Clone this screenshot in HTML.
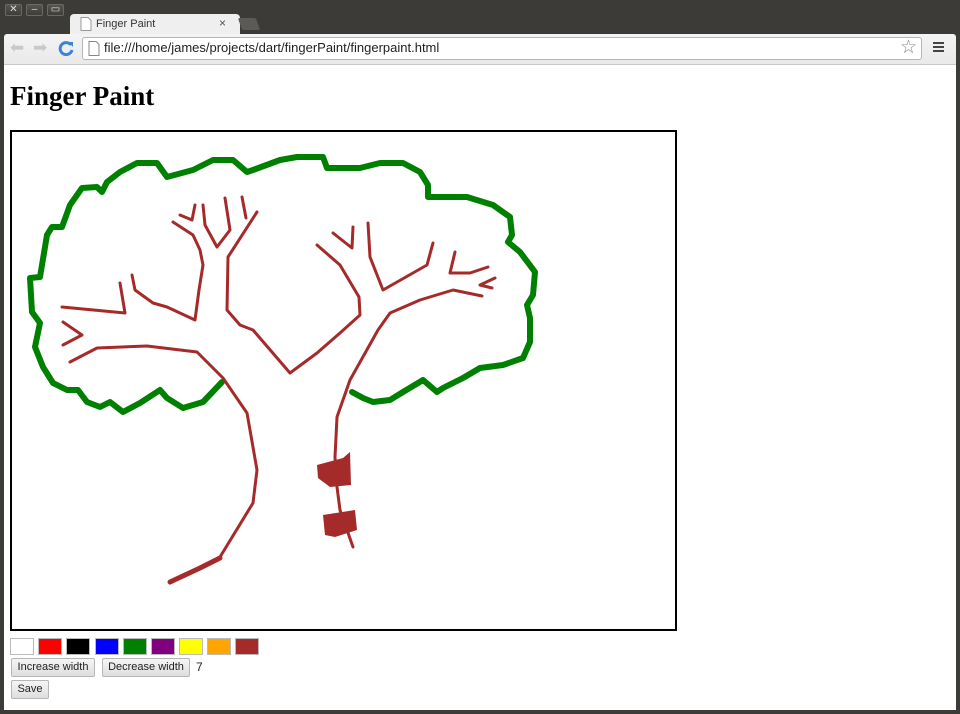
<!DOCTYPE html>
<html><head><meta charset="utf-8"><style>
*{margin:0;padding:0;box-sizing:border-box}
body{width:960px;height:714px;background:#3c3b37;position:relative;overflow:hidden;font-family:"Liberation Sans",sans-serif}
.abs{position:absolute}
.wb{top:4px;width:17px;height:12px;border:1px solid #6a6964;border-radius:2px;background:linear-gradient(#55544f,#3e3d39);color:#ddd;font-size:10px;line-height:10px;text-align:center}
.tab{left:70px;top:14px;width:170px;height:22px;background:#efefef;border-radius:4px 4px 0 0}
.tool{left:4px;top:34px;width:952px;height:30px;background:linear-gradient(#f4f4f4,#e9e9e9);border-radius:3px 3px 0 0}
.url{left:82px;top:37px;width:840px;height:23px;background:#fff;border:1px solid #b5b5b5;border-radius:3px}
.page{left:4px;top:64px;width:952px;height:646px;background:#fff;border-top:1px solid #c8c8c8}
h1{position:absolute;left:10px;top:81px;font-family:"Liberation Serif",serif;font-size:27px;font-weight:bold;color:#000}
.sw{position:absolute;top:638px;width:24px;height:17px;border:1px solid #bbb}
.btn{position:absolute;height:19px;border:1px solid #b6b6b6;border-radius:2px;background:linear-gradient(#f5f5f5,#dedede);font-size:11px;line-height:17px;text-align:center;color:#222}
</style></head><body>
<div class="abs wb" style="left:5px">✕</div>
<div class="abs wb" style="left:26px">–</div>
<div class="abs wb" style="left:47px">▭</div>
<div class="abs tab"></div>
<div class="abs" style="left:240px;top:18px;width:18px;height:12px;background:#5b5a56;border-radius:2px;transform:skewX(20deg)"></div>
<svg class="abs" style="left:80px;top:17px" width="12" height="14"><path d="M1 .5h7l3 3v10H1z" fill="#fff" stroke="#999"/></svg>
<div class="abs" style="left:96px;top:18px;font-size:11px;color:#333">Finger Paint</div>
<div class="abs" style="left:219px;top:16px;font-size:12px;color:#555">×</div>
<div class="abs tool"></div>
<div class="abs" style="left:10px;top:38px;font-size:17px;color:#c9c9c9">⬅</div>
<div class="abs" style="left:33px;top:38px;font-size:17px;color:#c9c9c9">➡</div>
<svg class="abs" style="left:58px;top:40px" width="16" height="16"><path d="M13 5A6 6 0 1 0 14 10" fill="none" stroke="#3d83d6" stroke-width="3"/><path d="M10 2l5 0 0 5z" fill="#3d83d6"/></svg>
<div class="abs url"></div>
<svg class="abs" style="left:88px;top:41px" width="12" height="15"><path d="M1 .5h7l3 3v11H1z" fill="#fff" stroke="#888"/></svg>
<div class="abs" style="left:104px;top:40px;font-size:13px;color:#222">file:///home/james/projects/dart/fingerPaint/fingerpaint.html</div>
<div class="abs" style="left:900px;top:36px;font-size:19px;color:#888">☆</div>
<div class="abs" style="left:933px;top:42px;width:11px;height:2px;background:#444;box-shadow:0 4px #444,0 8px #444"></div>
<div class="abs page"></div>
<h1>Finger Paint</h1>
<div class="abs" style="left:10px;top:130px;width:667px;height:501px;border:2px solid #000;background:#fff"></div>
<svg class="abs" style="left:0;top:0" width="960" height="714" fill="none" stroke-linejoin="round" stroke-linecap="round">
<polyline stroke="#008000" stroke-width="6" points="222,382 203,402 183,408 167,398 160,390 140,403 123,412 110,402 100,407 87,402 78,390 67,390 53,383 43,367 35,347 40,323 32,312 30,278 40,277 47,235 52,227 62,227 70,205 82,188 97,187 102,192 107,182 120,172 137,163 157,163 167,177 193,170 213,160 233,160 247,172 253,170 280,160 297,157 323,157 327,168 360,168 380,163 403,163 420,172 428,185 428,197 467,197 493,205 510,217 512,235 508,242 520,252 535,272 533,295 527,305 530,318 530,342 523,358 503,365 480,368 463,378 443,388 437,392 423,380 403,392 390,400 373,402 363,398 352,392"/>
<g stroke="#a52a2a" stroke-width="3">
<polyline points="170,583 220,557 253,503 257,470 247,413 223,378 197,352 147,346 97,348 70,362"/>
<polyline points="62,307 125,313 120,283"/>
<polyline points="132,275 135,290 153,303 167,307 195,320 199,290 203,265 200,250 193,235 173,222"/>
<polyline points="180,215 192,220 195,205"/>
<polyline points="203,205 205,225 217,247 230,230 225,198"/>
<polyline points="242,197 246,218"/>
<polyline points="257,212 228,257 227,310 240,325 253,330 290,373 317,353 340,333 360,315 359,297 340,265 317,245"/>
<polyline points="333,233 352,248 353,227"/>
<polyline points="368,223 370,257 383,290 427,265 433,243"/>
<polyline points="353,547 340,510 337,487 335,457 337,417 350,380 378,330 390,313 420,300 453,290 482,296"/>
<polyline points="455,252 450,273 470,273 488,267"/>
<polyline points="495,278 480,285 492,288"/>
<polyline points="63,322 82,335 63,345"/>
</g>
<polyline stroke="#a52a2a" stroke-width="5" points="170,582 200,568 220,558"/>
<path d="M317,465 L343,458 L350,452 L351,485 L330,487 L318,478Z M323,515 L355,510 L357,530 L335,537 L325,535Z" fill="#a52a2a"/>
</svg>
<div class="sw" style="left:10px;background:#fff"></div>
<div class="sw" style="left:38px;background:#f00"></div>
<div class="sw" style="left:66px;background:#000"></div>
<div class="sw" style="left:95px;background:#00f"></div>
<div class="sw" style="left:123px;background:#008000"></div>
<div class="sw" style="left:151px;background:#800080"></div>
<div class="sw" style="left:179px;background:#ff0"></div>
<div class="sw" style="left:207px;background:#ffa500"></div>
<div class="sw" style="left:235px;background:#a52a2a"></div>
<div class="btn" style="left:11px;top:658px;width:84px">Increase width</div>
<div class="btn" style="left:102px;top:658px;width:88px">Decrease width</div>
<div class="abs" style="left:196px;top:660px;font-size:12px;color:#222">7</div>
<div class="btn" style="left:11px;top:680px;width:38px">Save</div>
</body></html>
